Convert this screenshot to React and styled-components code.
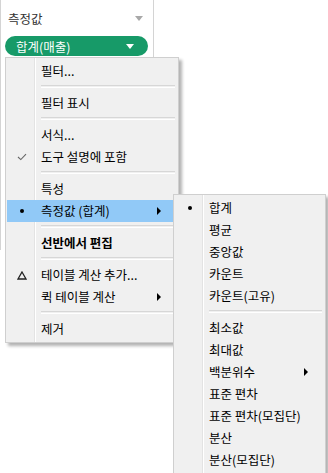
import React from "react";
import styled, { createGlobalStyle } from "styled-components";

const GlobalStyle = createGlobalStyle`
  html, body {
    margin: 0;
    padding: 0;
    background: #ffffff;
  }
  body {
    font-family: "Noto Sans CJK KR", "Noto Sans", sans-serif;
    font-size: 12.5px;
    color: #000;
  }
`;

const Page = styled.div`
  position: relative;
  width: 328px;
  height: 473px;
  overflow: hidden;
  background: #fff;
`;

const Pane = styled.div`
  width: 154px;
  height: 250px;
  box-sizing: border-box;
  border-left: 1px solid #d4d4d4;
  border-right: 1px solid #d4d4d4;
  padding: 0 4px;
`;

const PaneHeader = styled.div`
  display: flex;
  align-items: center;
  justify-content: space-between;
  height: 36px;
  padding: 0 6px 0 3px;
  color: #333;
`;

const Caret = styled.span`
  width: 0;
  height: 0;
  border-left: 4px solid transparent;
  border-right: 4px solid transparent;
  border-top: 5px solid ${({ color }) => color || "#a8a8a8"};
`;

const Pill = styled.div`
  display: flex;
  align-items: center;
  justify-content: space-between;
  width: 143px;
  height: 20px;
  box-sizing: border-box;
  padding: 0 14px 0 11px;
  border-radius: 10px;
  background: #179a68;
  color: #fff;
`;

const Menu = styled.div`
  position: absolute;
  left: ${({ x }) => x}px;
  top: ${({ y }) => y}px;
  width: ${({ w }) => w}px;
  box-sizing: border-box;
  padding: 2px 1px;
  border: 1px solid #cfcfcf;
  background:
    linear-gradient(to right, transparent 28px, #e3e3e3 28px, #e3e3e3 29px, #fff 29px, #fff 30px, transparent 30px),
    #f0f0f0;
  box-shadow: 3px 3px 3px rgba(0, 0, 0, 0.3);
`;

const Item = styled.div`
  display: grid;
  grid-template-columns: 29px 1fr 20px;
  align-items: center;
  height: 22px;
  background: ${({ active }) => (active ? "#91c9f7" : "transparent")};
  font-weight: ${({ bold }) => (bold ? 700 : 400)};
  white-space: nowrap;
`;

const Mark = styled.span`
  display: flex;
  justify-content: center;
  align-items: center;
`;

const Label = styled.span`
  padding-left: 5px;
  line-height: 22px;
`;

const Arrow = styled.span`
  width: 0;
  height: 0;
  border-top: 4px solid transparent;
  border-bottom: 4px solid transparent;
  border-left: 4px solid #000;
  justify-self: start;
`;

const Separator = styled.div`
  margin: 3px 2px 4px 34px;
  height: 1px;
  border-top: 1px solid #d7d7d7;
  border-bottom: 1px solid #ffffff;
`;

const Dot = styled.span`
  width: 4px;
  height: 4px;
  border-radius: 50%;
  background: #000;
`;

const Check = () => (
  <svg width="10" height="8" viewBox="0 0 10 8">
    <path d="M1 4 L3.8 6.6 L9 1.2" fill="none" stroke="#666" strokeWidth="1.1" />
  </svg>
);

const Delta = () => (
  <svg width="10" height="9" viewBox="0 0 10 9">
    <path d="M5 1 L9 8 L1 8 Z" fill="none" stroke="#222" strokeWidth="1.3" />
  </svg>
);

const marks = {
  check: <Check />,
  dot: <Dot />,
  delta: <Delta />,
};

const MenuRow = ({ mark, label, sub, active, bold }) => (
  <Item active={active} bold={bold}>
    <Mark>{mark ? marks[mark] : null}</Mark>
    <Label>{label}</Label>
    {sub ? <Arrow /> : <span />}
  </Item>
);

const mainMenu = [
  { label: "필터..." },
  "-",
  { label: "필터 표시" },
  "-",
  { label: "서식..." },
  { label: "도구 설명에 포함", mark: "check" },
  "-",
  { label: "특성" },
  { label: "측정값 (합계)", mark: "dot", sub: true, active: true },
  "-",
  { label: "선반에서 편집", bold: true },
  "-",
  { label: "테이블 계산 추가...", mark: "delta" },
  { label: "퀵 테이블 계산", sub: true },
  "-",
  { label: "제거" },
];

const subMenu = [
  { label: "합계", mark: "dot" },
  { label: "평균" },
  { label: "중앙값" },
  { label: "카운트" },
  { label: "카운트(고유)" },
  "-",
  { label: "최소값" },
  { label: "최대값" },
  { label: "백분위수", sub: true },
  { label: "표준 편차" },
  { label: "표준 편차(모집단)" },
  { label: "분산" },
  { label: "분산(모집단)" },
];

const renderItems = (items) =>
  items.map((it, i) =>
    it === "-" ? <Separator key={i} /> : <MenuRow key={i} {...it} />
  );

export default function App() {
  return (
    <Page>
      <GlobalStyle />
      <Pane>
        <PaneHeader>
          측정값
          <Caret />
        </PaneHeader>
        <Pill>
          합계(매출)
          <Caret color="#fff" />
        </Pill>
      </Pane>
      <Menu x={5} y={57} w={174}>
        {renderItems(mainMenu)}
      </Menu>
      <Menu x={173} y={194} w={153}>
        {renderItems(subMenu)}
      </Menu>
    </Page>
  );
}
